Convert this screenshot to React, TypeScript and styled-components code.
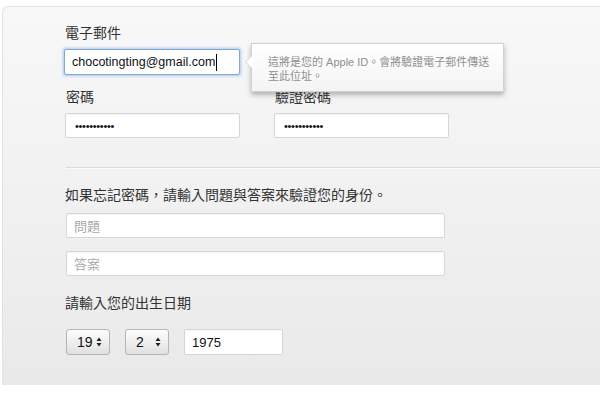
import styled, { createGlobalStyle } from 'styled-components';

const GlobalStyle = createGlobalStyle`
  html, body {
    margin: 0;
    padding: 0;
    background: #ffffff;
    overflow: hidden;
  }
  body {
    font-family: "Liberation Sans", "Noto Sans CJK TC", sans-serif;
  }
`;

const Page = styled.div`
  width: 600px;
  height: 400px;
  padding: 6px 0 0 2px;
  box-sizing: border-box;
`;

const Panel = styled.div`
  width: 620px;
  height: 379px;
  box-sizing: border-box;
  padding: 17px 0 0 61px;
  border-top: 1px solid #e2e2e2;
  border-left: 1px solid #e2e2e2;
  border-radius: 6px 0 0 0;
  background: linear-gradient(to bottom, #f8f8f8 0%, #f1f1f1 50%, #e9e9e9 100%);
`;

const Label = styled.div<{ $gap?: number }>`
  font-size: 14px;
  line-height: 18px;
  color: #333;
  margin: 0 0 ${({ $gap }) => $gap ?? 7}px 1px;
`;

const Field = styled.div<{ $width: number; $height?: number; $focused?: boolean }>`
  width: ${({ $width }) => $width}px;
  height: ${({ $height }) => $height ?? 25}px;
  box-sizing: border-box;
  display: flex;
  align-items: center;
  padding: 0 7px;
  background: #fff;
  border: 1px solid ${({ $focused }) => ($focused ? '#82a9d6' : '#d6d6d6')};
  border-radius: 2px;
  box-shadow: ${({ $focused }) =>
    $focused ? '0 0 3px 1px rgba(110, 160, 220, 0.55)' : 'inset 0 1px 1px rgba(0,0,0,0.04)'};
  font-size: 13px;
  color: #111;
`;

const EmailText = styled.span`
  font-size: 12.5px;
`;

const Caret = styled.span`
  display: inline-block;
  width: 1px;
  height: 17px;
  background: #000;
  margin-left: 1px;
`;

const Dots = styled.span`
  font-size: 11px;
  letter-spacing: -0.3px;
  color: #111;
  padding-left: 2px;
`;

const Placeholder = styled.span`
  font-size: 13px;
  color: #aaa;
`;

const EmailRow = styled.div`
  position: relative;
  margin-bottom: 13px;
`;

const Tooltip = styled.div`
  position: absolute;
  left: 187px;
  top: -6px;
  width: 253px;
  height: 49px;
  box-sizing: border-box;
  padding: 11px 0 0 16px;
  background: linear-gradient(to bottom, #ffffff, #f4f4f4);
  border: 1px solid #d2d2d2;
  box-shadow: 0 3px 5px rgba(0, 0, 0, 0.28);
  font-size: 11px;
  line-height: 14px;
  white-space: nowrap;
  color: #8f8f8f;
  z-index: 2;

  &::before,
  &::after {
    content: '';
    position: absolute;
    top: 11px;
    border-style: solid;
    border-color: transparent;
  }
  &::before {
    left: -7px;
    border-width: 7px 7px 7px 0;
    border-right-color: #d2d2d2;
  }
  &::after {
    left: -6px;
    border-width: 7px 7px 7px 0;
    border-right-color: #fff;
  }
`;

const Columns = styled.div`
  display: flex;
  gap: 34px;
  margin-left: 1px;
`;

const Column = styled.div``;

const Separator = styled.div`
  height: 1px;
  margin: 29px 0 17px 2px;
  background: #d9d9d9;
  border-bottom: 1px solid #fbfbfb;
`;

const Stack = styled.div`
  display: flex;
  flex-direction: column;
  gap: 13px;
  margin-left: 2px;
`;

const DateLabel = styled(Label)`
  margin-top: 18px;
`;

const DateRow = styled.div`
  display: flex;
  gap: 15px;
  margin-left: 2px;
`;

const SelectBox = styled.div`
  width: 44px;
  height: 26px;
  box-sizing: border-box;
  display: flex;
  align-items: center;
  justify-content: space-between;
  padding: 0 7px 0 10px;
  border: 1px solid #b4b4b4;
  border-radius: 3px;
  background: linear-gradient(to bottom, #fdfdfd 0%, #efefef 50%, #e0e0e0 100%);
  font-size: 14px;
  color: #111;
`;

const Arrows = () => (
  <svg width="6" height="10" viewBox="0 0 6 10">
    <path d="M3 0.5 L5.5 4 H0.5 Z" fill="#222" />
    <path d="M3 9.5 L5.5 6 H0.5 Z" fill="#222" />
  </svg>
);

const Footer = styled.div`
  height: 15px;
  background: #fff;
`;

const App = () => {
  return (
    <>
      <GlobalStyle />
      <Page>
        <Panel>
          <Label>電子郵件</Label>
          <EmailRow>
            <Field $width={176} $height={26} $focused>
              <EmailText>chocotingting@gmail.com</EmailText>
              <Caret />
            </Field>
            <Tooltip>
              這將是您的 Apple ID。會將驗證電子郵件傳送
              <br />
              至此位址。
            </Tooltip>
          </EmailRow>

          <Columns>
            <Column>
              <Label>密碼</Label>
              <Field $width={175}>
                <Dots>•••••••••••</Dots>
              </Field>
            </Column>
            <Column>
              <Label>驗證密碼</Label>
              <Field $width={175}>
                <Dots>•••••••••••</Dots>
              </Field>
            </Column>
          </Columns>

          <Separator />

          <Label $gap={9}>如果忘記密碼，請輸入問題與答案來驗證您的身份。</Label>
          <Stack>
            <Field $width={379}>
              <Placeholder>問題</Placeholder>
            </Field>
            <Field $width={379}>
              <Placeholder>答案</Placeholder>
            </Field>
          </Stack>

          <DateLabel $gap={17}>請輸入您的出生日期</DateLabel>
          <DateRow>
            <SelectBox>
              19
              <Arrows />
            </SelectBox>
            <SelectBox>
              2
              <Arrows />
            </SelectBox>
            <Field $width={99} $height={26}>1975</Field>
          </DateRow>
        </Panel>
        <Footer />
      </Page>
    </>
  );
};

export default App;
